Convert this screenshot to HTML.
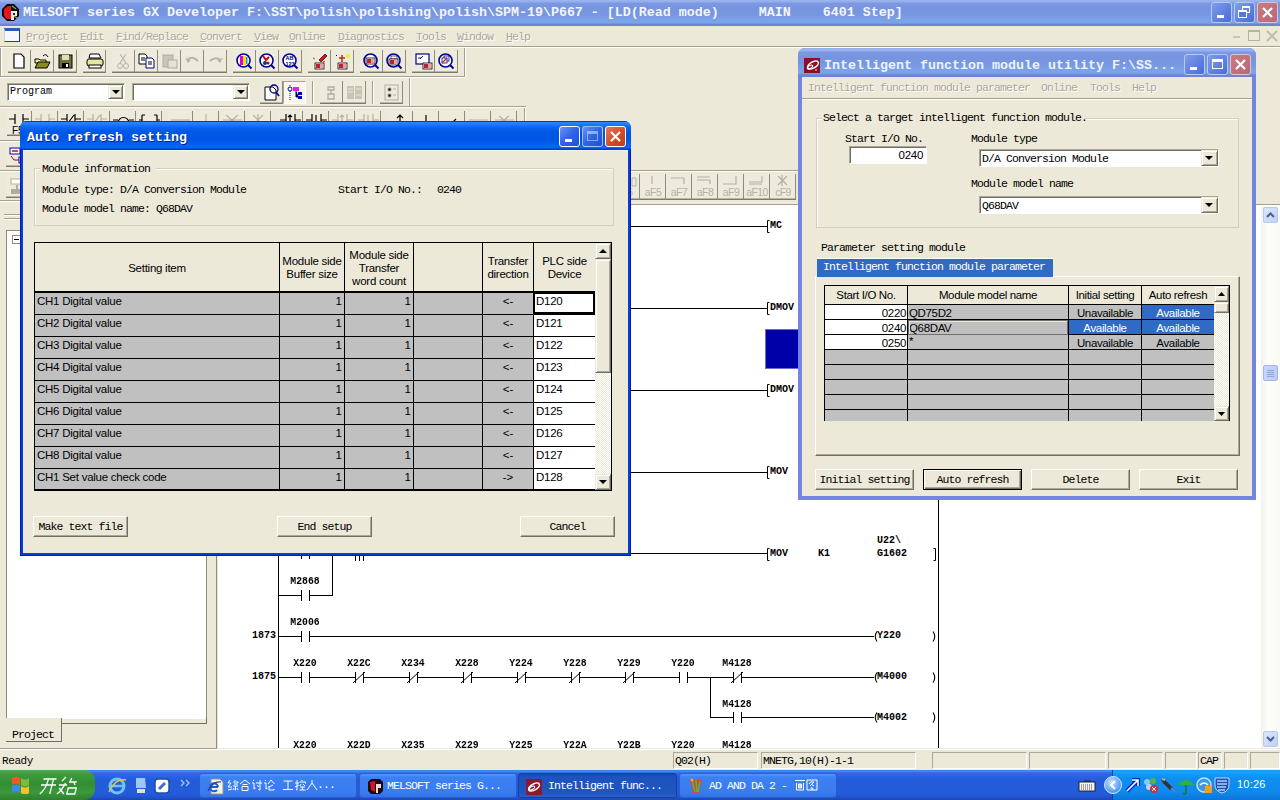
<!DOCTYPE html><html><head><meta charset="utf-8"><style>
*{box-sizing:border-box;margin:0;padding:0}
html,body{width:1280px;height:800px;overflow:hidden;background:#ECE9D8;font-family:"Liberation Mono",monospace;font-size:10px;color:#000;position:relative}
.a{position:absolute;white-space:pre}
.mono{font-family:"Liberation Mono",monospace}
.sans{font-family:"Liberation Sans",sans-serif}
.serif{font-family:"Liberation Serif",serif}
.tbtn{position:absolute;background:#EEEBDD;border-right:1px solid #8F8C7D;border-bottom:1px solid #7D7A6C;box-shadow:inset 0 -1px 0 #B9B6A6}
.xbtn{position:absolute;background:#ECE9D8;border:1px solid #FFF;border-right-color:#716F64;border-bottom-color:#716F64;box-shadow:inset -1px -1px 0 #ACA899}
.combo{position:absolute;background:#FFF;border:1px solid;border-color:#ACA899 #FFF #FFF #ACA899;box-shadow:inset 1px 1px 0 #716F64}
.cbb{position:absolute;background:#ECE9D8;border:1px solid;border-color:#ECE9D8 #716F64 #716F64 #ECE9D8;box-shadow:inset 1px 1px 0 #FFF,inset -1px -1px 0 #ACA899}
.tri{position:absolute;width:0;height:0;border-left:4px solid transparent;border-right:4px solid transparent;border-top:4px solid #000}
.menu{color:#ACA899;text-shadow:1px 1px 0 #FFF;font-size:10px}
.u{text-decoration:underline}
</style></head><body>
<div class="a" style="left:0px;top:0px;width:1280px;height:26px;background:linear-gradient(#9DB5EE 0,#93ADEC 2px,#7D99E3 3px,#7794E0 8px,#7895E0 14px,#7BA0E6 19px,#7BA5E9 23px,#6F86D8 24px,#6C80D4 26px)"></div>
<svg class="a" style="left:2px;top:4px" width="17" height="17" viewBox="0 0 17 17"><polygon points="5,0 12,0 17,5 17,12 12,17 5,17 0,12 0,5" fill="#120808"/><path d="M2 5 L6 2 L9 2 L9 15 L5 15 L2 12 Z" fill="#E01818"/><path d="M9 7 h6 v5 h-3 v4 h-3 z" fill="#F0ECEC"/><rect x="11" y="9" width="2" height="2" fill="#222"/><path d="M10 2 l4 3" stroke="#60B060" stroke-width="1.5"/><path d="M12 12 l3 2" stroke="#A0A060" stroke-width="1.2"/></svg>
<div class="a mono" style="left:23px;top:5px;color:#F2F5FD;font-size:13.33px;font-weight:bold;line-height:16px">MELSOFT series GX Developer F:\SST\polish\polishing\polish\SPM-19\P667 - [LD(Read mode)     MAIN    6401 Step]</div>
<div class="a" style="left:1211px;top:2px;width:21px;height:21px;border-radius:3px;border:1px solid #B8CAF4;background:linear-gradient(135deg,#7F9DEA,#5E7FE0 60%,#4B6BD8)"></div>
<div class="a" style="left:1217px;top:15px;width:7px;height:3px;background:#FFF"></div>
<div class="a" style="left:1234px;top:2px;width:21px;height:21px;border-radius:3px;border:1px solid #B8CAF4;background:linear-gradient(135deg,#7F9DEA,#5E7FE0 60%,#4B6BD8)"></div>
<div class="a" style="left:1242px;top:6px;width:8px;height:7px;border:1px solid #FFF;border-top:2px solid #FFF"></div>
<div class="a" style="left:1238px;top:10px;width:9px;height:8px;border:1px solid #FFF;border-top:2px solid #FFF;background:#5676DC"></div>
<div class="a" style="left:1257px;top:2px;width:21px;height:21px;border-radius:3px;border:1px solid #E2C2D0;background:linear-gradient(135deg,#C97B7B,#B66A7A)"></div>
<svg class="a" style="left:1257px;top:2px" width="21" height="21"><path d="M6 6 L15 15 M15 6 L6 15" stroke="#fff" stroke-width="2.2"/></svg>
<div class="a" style="left:0px;top:26px;width:1280px;height:20px;background:#ECE9D8"></div>
<div class="a" style="left:0px;top:46px;width:1280px;height:1px;background:#A3A08F"></div>
<div class="a" style="left:0px;top:47px;width:1280px;height:1px;background:#FFF"></div>
<div class="a" style="left:4px;top:28px;width:16px;height:14px;background:#F6F9FF;border:1px solid #20408a;border-top:3px solid #2C5CC5;border-left-color:#c8d4ee"></div>
<div class="a menu" style="left:26px;top:31px;line-height:12px;font-size:11.5px;letter-spacing:-0.9px"><span class="u">P</span>roject</div>
<div class="a menu" style="left:80px;top:31px;line-height:12px;font-size:11.5px;letter-spacing:-0.9px"><span class="u">E</span>dit</div>
<div class="a menu" style="left:116px;top:31px;line-height:12px;font-size:11.5px;letter-spacing:-0.9px"><span class="u">F</span>ind/Replace</div>
<div class="a menu" style="left:200px;top:31px;line-height:12px;font-size:11.5px;letter-spacing:-0.9px"><span class="u">C</span>onvert</div>
<div class="a menu" style="left:254px;top:31px;line-height:12px;font-size:11.5px;letter-spacing:-0.9px"><span class="u">V</span>iew</div>
<div class="a menu" style="left:289px;top:31px;line-height:12px;font-size:11.5px;letter-spacing:-0.9px"><span class="u">O</span>nline</div>
<div class="a menu" style="left:338px;top:31px;line-height:12px;font-size:11.5px;letter-spacing:-0.9px"><span class="u">D</span>iagnostics</div>
<div class="a menu" style="left:416px;top:31px;line-height:12px;font-size:11.5px;letter-spacing:-0.9px"><span class="u">T</span>ools</div>
<div class="a menu" style="left:457px;top:31px;line-height:12px;font-size:11.5px;letter-spacing:-0.9px"><span class="u">W</span>indow</div>
<div class="a menu" style="left:506px;top:31px;line-height:12px;font-size:11.5px;letter-spacing:-0.9px"><span class="u">H</span>elp</div>
<div class="a" style="left:1233px;top:36px;width:7px;height:2px;background:#C9C6B8"></div>
<div class="a" style="left:1248px;top:30px;width:12px;height:11px;border:1px solid #B5B2A2;border-top-width:2px"></div>
<svg class="a" style="left:1266px;top:30px" width="12" height="12"><path d="M1 1 L11 11 M11 1 L1 11" stroke="#BDBAAA" stroke-width="1.8"/></svg>
<div class="a" style="left:0px;top:76px;width:465px;height:1px;background:#A3A08F"></div>
<div class="a" style="left:0px;top:77px;width:465px;height:1px;background:#FFF"></div>
<div class="a" style="left:464px;top:48px;width:1px;height:29px;background:#A3A08F"></div>
<div class="a" style="left:465px;top:48px;width:1px;height:29px;background:#FFF"></div>
<div class="a" style="left:409px;top:78px;width:1px;height:28px;background:#A3A08F"></div>
<div class="a" style="left:410px;top:78px;width:1px;height:28px;background:#FFF"></div>
<div class="a" style="left:0px;top:106px;width:526px;height:1px;background:#A3A08F"></div>
<div class="a" style="left:0px;top:107px;width:526px;height:1px;background:#FFF"></div>
<div class="a" style="left:524px;top:108px;width:1px;height:30px;background:#A3A08F"></div>
<div class="a" style="left:525px;top:108px;width:1px;height:30px;background:#FFF"></div>
<div class="a" style="left:0px;top:140px;width:600px;height:1px;background:#A3A08F"></div>
<div class="a" style="left:0px;top:141px;width:600px;height:1px;background:#FFF"></div>
<div class="a" style="left:0px;top:170px;width:1000px;height:1px;background:#A3A08F"></div>
<div class="a" style="left:0px;top:171px;width:1000px;height:1px;background:#FFF"></div>
<div class="a" style="left:0px;top:200px;width:40px;height:1px;background:#A3A08F"></div>
<div class="a" style="left:0px;top:201px;width:40px;height:1px;background:#FFF"></div>
<div class="a" style="left:600px;top:204px;width:680px;height:1px;background:#A3A08F"></div>
<div class="a" style="left:600px;top:205px;width:680px;height:1px;background:#FFF"></div>
<div class="a" style="left:0px;top:48px;width:1px;height:28px;background:#A3A08F"></div>
<div class="a" style="left:1px;top:48px;width:1px;height:28px;background:#FFF"></div>
<div class="tbtn" style="left:8px;top:50px;width:23px;height:23px"></div>
<svg class="a" style="left:8px;top:50px" width="23" height="23" viewBox="0 0 23 23"><path d="M6 4h7l3 3v11H6z" fill="#fff" stroke="#000" stroke-width="1.2"/></svg>
<div class="tbtn" style="left:31px;top:50px;width:23px;height:23px"></div>
<svg class="a" style="left:31px;top:50px" width="23" height="23" viewBox="0 0 23 23"><path d="M4 9h4l1 1h6v3H4z" fill="#F2F088" stroke="#000"/><path d="M4 18l3-6h12l-3 6z" fill="#8A8A20" stroke="#000"/><path d="M12 6q3-3 5 1" stroke="#000" fill="none"/></svg>
<div class="tbtn" style="left:54px;top:50px;width:23px;height:23px"></div>
<svg class="a" style="left:54px;top:50px" width="23" height="23" viewBox="0 0 23 23"><rect x="5" y="5" width="13" height="13" fill="#70703A" stroke="#000"/><rect x="8" y="5" width="7" height="5" fill="#DDDDC0"/><rect x="8" y="13" width="7" height="5" fill="#000"/><rect x="12" y="14" width="2" height="3" fill="#fff"/></svg>
<div class="tbtn" style="left:83px;top:50px;width:23px;height:23px"></div>
<svg class="a" style="left:83px;top:50px" width="23" height="23" viewBox="0 0 23 23"><path d="M7 4h9l2 4H6z" fill="#fff" stroke="#000"/><rect x="4" y="9" width="16" height="7" rx="2" fill="#E6E6A0" stroke="#000"/><rect x="6" y="15" width="12" height="3" fill="#fff" stroke="#000"/></svg>
<div class="tbtn" style="left:112px;top:50px;width:23px;height:23px"></div>
<svg class="a" style="left:112px;top:50px" width="23" height="23" viewBox="0 0 23 23"><path d="M8 4l6 9M14 4l-6 9" stroke="#B8B5A5" stroke-width="1.2"/><circle cx="8" cy="16" r="2.5" fill="none" stroke="#B8B5A5"/><circle cx="14" cy="16" r="2.5" fill="none" stroke="#B8B5A5"/></svg>
<div class="tbtn" style="left:135px;top:50px;width:23px;height:23px"></div>
<svg class="a" style="left:135px;top:50px" width="23" height="23" viewBox="0 0 23 23"><path d="M4 4h6l2 2v8H4z" fill="#fff" stroke="#000"/><path d="M11 8h6l2 2v8h-8z" fill="#fff" stroke="#000080"/><path d="M13 12h4M13 14h4M6 8h4M6 10h4" stroke="#000"/></svg>
<div class="tbtn" style="left:158px;top:50px;width:23px;height:23px"></div>
<svg class="a" style="left:158px;top:50px" width="23" height="23" viewBox="0 0 23 23"><rect x="5" y="5" width="10" height="12" fill="#C9C6B6" stroke="#B0AD9C"/><rect x="10" y="10" width="9" height="8" fill="#E4E2D6" stroke="#B0AD9C"/></svg>
<div class="tbtn" style="left:181px;top:50px;width:23px;height:23px"></div>
<svg class="a" style="left:181px;top:50px" width="23" height="23" viewBox="0 0 23 23"><path d="M6 10q5-5 11 1" stroke="#B8B5A5" stroke-width="2" fill="none"/><path d="M4 8l3 5 3-3z" fill="#B8B5A5"/></svg>
<div class="tbtn" style="left:204px;top:50px;width:23px;height:23px"></div>
<svg class="a" style="left:204px;top:50px" width="23" height="23" viewBox="0 0 23 23"><path d="M6 11q5-5 11-1" stroke="#B8B5A5" stroke-width="2" fill="none"/><path d="M19 8l-3 5-3-3z" fill="#B8B5A5"/></svg>
<div class="tbtn" style="left:233px;top:50px;width:23px;height:23px"></div>
<svg class="a" style="left:233px;top:50px" width="23" height="23" viewBox="0 0 23 23"><circle cx="10.5" cy="10.5" r="6.5" fill="#fff" stroke="#0000A0" stroke-width="1.6"/><rect x="7" y="6" width="3" height="9" fill="#E000E0"/><rect x="10" y="6" width="3" height="9" fill="#E8E800"/><rect x="13" y="7" width="1.5" height="7" fill="#00A0E0"/><path d="M15 15l3.5 3.5" stroke="#0000A0" stroke-width="2"/></svg>
<div class="tbtn" style="left:256px;top:50px;width:23px;height:23px"></div>
<svg class="a" style="left:256px;top:50px" width="23" height="23" viewBox="0 0 23 23"><circle cx="10.5" cy="10.5" r="6.5" fill="#fff" stroke="#0000A0" stroke-width="1.6"/><path d="M7 6l3 4 3-3" stroke="#D00000" stroke-width="2" fill="none"/><circle cx="9" cy="13" r="2" fill="#004080"/><circle cx="12" cy="13" r="1.5" fill="#D00000"/><path d="M15 15l3.5 3.5" stroke="#0000A0" stroke-width="2"/></svg>
<div class="tbtn" style="left:279px;top:50px;width:23px;height:23px"></div>
<svg class="a" style="left:279px;top:50px" width="23" height="23" viewBox="0 0 23 23"><circle cx="10.5" cy="10.5" r="6.5" fill="#fff" stroke="#0000A0" stroke-width="1.6"/><text x="6.5" y="10" font-size="5.5" font-weight="bold" font-family="Liberation Sans" fill="#000080">AB</text><text x="6.5" y="15.5" font-size="5.5" font-weight="bold" font-family="Liberation Sans" fill="#000080">123</text><path d="M15 15l3.5 3.5" stroke="#0000A0" stroke-width="2"/></svg>
<div class="tbtn" style="left:308px;top:50px;width:23px;height:23px"></div>
<svg class="a" style="left:308px;top:50px" width="23" height="23" viewBox="0 0 23 23"><path d="M11 10l6-6 2 2-6 6z" fill="#E01010" stroke="#000" stroke-width=".6"/><path d="M5 8l2 1M17 11l-2 1" stroke="#C00000" stroke-width=".8"/><rect x="7" y="13" width="9" height="6" fill="#fff" stroke="#000" stroke-width=".8"/><rect x="8" y="14" width="4" height="4" fill="#C02030"/><rect x="12" y="14" width="3" height="4" fill="#E8A0A8"/></svg>
<div class="tbtn" style="left:331px;top:50px;width:23px;height:23px"></div>
<svg class="a" style="left:331px;top:50px" width="23" height="23" viewBox="0 0 23 23"><path d="M11 5v7M8 8h6" stroke="#D02020" stroke-width="1.5"/><path d="M5 5l1 1" stroke="#0000C0"/><circle cx="17" cy="6" r="2.2" fill="#F0F040"/><rect x="7" y="13" width="9" height="6" fill="#fff" stroke="#000" stroke-width=".8"/><rect x="8" y="14" width="4" height="4" fill="#C02030"/><rect x="12" y="14" width="3" height="4" fill="#E8A0A8"/></svg>
<div class="tbtn" style="left:360px;top:50px;width:23px;height:23px"></div>
<svg class="a" style="left:360px;top:50px" width="23" height="23" viewBox="0 0 23 23"><circle cx="10.5" cy="10.5" r="6.5" fill="#fff" stroke="#0000A0" stroke-width="1.6"/><rect x="6" y="8" width="9" height="6" fill="#fff" stroke="#000" stroke-width=".8"/><rect x="7" y="9" width="4" height="4" fill="#C02030"/><rect x="11" y="9" width="3" height="4" fill="#E8A0A8"/><path d="M15 15l3.5 3.5" stroke="#0000A0" stroke-width="2"/></svg>
<div class="tbtn" style="left:383px;top:50px;width:23px;height:23px"></div>
<svg class="a" style="left:383px;top:50px" width="23" height="23" viewBox="0 0 23 23"><circle cx="10.5" cy="10.5" r="6.5" fill="#fff" stroke="#0000A0" stroke-width="1.6"/><rect x="8" y="6" width="6" height="3" fill="#fff" stroke="#000" stroke-width=".6"/><rect x="6" y="9" width="9" height="6" fill="#fff" stroke="#000" stroke-width=".8"/><rect x="7" y="10" width="4" height="4" fill="#C02030"/><rect x="11" y="10" width="3" height="4" fill="#E8A0A8"/><path d="M15 15l3.5 3.5" stroke="#0000A0" stroke-width="2"/></svg>
<div class="tbtn" style="left:412px;top:50px;width:23px;height:23px"></div>
<svg class="a" style="left:412px;top:50px" width="23" height="23" viewBox="0 0 23 23"><rect x="4" y="4" width="13" height="10" fill="#fff" stroke="#000080" stroke-width="1.2"/><path d="M6 8h3l2-2M9 8l-1 1" stroke="#000080" stroke-width=".9" fill="none"/><rect x="11" y="13" width="9" height="6" fill="#fff" stroke="#000" stroke-width=".8"/><rect x="12" y="14" width="4" height="4" fill="#C02030"/><rect x="16" y="14" width="3" height="4" fill="#E8A0A8"/></svg>
<div class="tbtn" style="left:435px;top:50px;width:23px;height:23px"></div>
<svg class="a" style="left:435px;top:50px" width="23" height="23" viewBox="0 0 23 23"><circle cx="10.5" cy="10.5" r="6.5" fill="#fff" stroke="#0000A0" stroke-width="1.6"/><rect x="9" y="6" width="5" height="5" fill="#fff" stroke="#000080" stroke-width=".8"/><rect x="7" y="8" width="5" height="5" fill="#fff" stroke="#000080" stroke-width=".8"/><path d="M7 13l5-5" stroke="#C02030" stroke-width="1.2"/><path d="M15 15l3.5 3.5" stroke="#0000A0" stroke-width="2"/></svg>
<div class="combo" style="left:7px;top:83px;width:118px;height:18px"></div>
<div class="a mono" style="left:10px;top:86px;font-size:10px;line-height:12px">Program</div>
<div class="cbb" style="left:108px;top:85px;width:15px;height:14px"></div>
<div class="tri" style="left:112px;top:90px"></div>
<div class="combo" style="left:132px;top:83px;width:118px;height:18px"></div>
<div class="cbb" style="left:233px;top:85px;width:15px;height:14px"></div>
<div class="tri" style="left:237px;top:90px"></div>
<div class="tbtn" style="left:260px;top:81px;width:23px;height:23px"></div>
<svg class="a" style="left:260px;top:81px" width="23" height="23" viewBox="0 0 23 23"><path d="M5 6h8l3 3v10H5z" fill="#fff" stroke="#000"/><circle cx="14" cy="8" r="4" fill="none" stroke="#000080" stroke-width="1.3"/><path d="M16 11l3 4" stroke="#000080" stroke-width="1.5"/></svg>
<div class="a" style="left:283px;top:81px;width:23px;height:23px;background:#F7F6F1;border:1px solid;border-color:#A7A493 #FFF #FFF #A7A493"></div>
<svg class="a" style="left:283px;top:81px" width="23" height="23" viewBox="0 0 23 23"><path d="M7 4v16" stroke="#0000A0" stroke-dasharray="1 1"/><circle cx="7" cy="8" r="2" fill="#fff" stroke="#0000A0"/><rect x="10" y="6" width="6" height="4" fill="#E020E0"/><path d="M13 10v6h3" stroke="#0000A0"/><rect x="15" y="11" width="4" height="3" fill="#0000C0"/><rect x="15" y="15" width="4" height="3" fill="#0000C0"/></svg>
<div class="a" style="left:312px;top:81px;width:1px;height:23px;background:#A3A08F"></div>
<div class="a" style="left:313px;top:81px;width:1px;height:23px;background:#FFF"></div>
<div class="tbtn" style="left:320px;top:81px;width:23px;height:23px"></div>
<svg class="a" style="left:320px;top:81px" width="23" height="23" viewBox="0 0 23 23"><path d="M8 6h6v3h-6zM11 9v4M8 13h6v5h-6z" fill="none" stroke="#B0AD9C" stroke-width="1.3"/></svg>
<div class="tbtn" style="left:343px;top:81px;width:23px;height:23px"></div>
<svg class="a" style="left:343px;top:81px" width="23" height="23" viewBox="0 0 23 23"><rect x="4" y="5" width="7" height="13" fill="#C8C5B5"/><rect x="12" y="5" width="7" height="13" fill="#C8C5B5"/><path d="M5 8h5M5 11h5M13 8h5M13 14h5" stroke="#ECE9D8"/></svg>
<div class="a" style="left:372px;top:81px;width:1px;height:23px;background:#A3A08F"></div>
<div class="a" style="left:373px;top:81px;width:1px;height:23px;background:#FFF"></div>
<div class="tbtn" style="left:380px;top:81px;width:23px;height:23px"></div>
<svg class="a" style="left:380px;top:81px" width="23" height="23" viewBox="0 0 23 23"><rect x="5" y="4" width="13" height="15" fill="none" stroke="#B0AD9C"/><path d="M8 7h3v3H8zM8 13h3v3H8zM13 8h3M13 14h3" stroke="#B0AD9C"/></svg>
<div class="tbtn" style="left:7px;top:111px;width:25px;height:25px"></div>
<svg class="a" style="left:7px;top:111px" width="25" height="25" viewBox="0 0 25 25"><g stroke="#000" stroke-width="1.2" fill="none"><path d="M2 8h6M8 3v10M16 3v10M16 8h6"/></g><text x="5" y="23" font-size="10" font-family="Liberation Sans">F5</text></svg>
<div class="tbtn" style="left:33px;top:111px;width:25px;height:25px"></div>
<svg class="a" style="left:33px;top:111px" width="25" height="25" viewBox="0 0 25 25"><g stroke="#B5B2A2" stroke-width="1.2" fill="none"><path d="M2 8h6M8 3v10M16 3v10M16 8h6"/></g></svg>
<div class="tbtn" style="left:59px;top:111px;width:25px;height:25px"></div>
<svg class="a" style="left:59px;top:111px" width="25" height="25" viewBox="0 0 25 25"><g stroke="#000" stroke-width="1.2" fill="none"><path d="M2 8h6M8 3v10M16 3v10M16 8h6M9 12l6-8"/></g></svg>
<div class="tbtn" style="left:85px;top:111px;width:25px;height:25px"></div>
<svg class="a" style="left:85px;top:111px" width="25" height="25" viewBox="0 0 25 25"><g stroke="#B5B2A2" stroke-width="1.2" fill="none"><path d="M2 8h6M8 3v10M16 3v10M16 8h6M9 12l6-8"/></g></svg>
<div class="tbtn" style="left:111px;top:111px;width:25px;height:25px"></div>
<svg class="a" style="left:111px;top:111px" width="25" height="25" viewBox="0 0 25 25"><g stroke="#000" stroke-width="1.2" fill="none"><path d="M2 9h5M18 9h5"/><path d="M7 12a5.5 5.5 0 0 1 11 0"/></g></svg>
<div class="tbtn" style="left:137px;top:111px;width:25px;height:25px"></div>
<svg class="a" style="left:137px;top:111px" width="25" height="25" viewBox="0 0 25 25"><g stroke="#000" stroke-width="1.2" fill="none"><path d="M5 4h3M5 4v10h3M20 4h-3M20 4v10h-3M2 9h3M20 9h3"/></g></svg>
<div class="tbtn" style="left:168px;top:111px;width:25px;height:25px"></div>
<svg class="a" style="left:168px;top:111px" width="25" height="25" viewBox="0 0 25 25"><g stroke="#B5B2A2" stroke-width="1.2" fill="none"><path d="M3 9h19"/></g></svg>
<div class="tbtn" style="left:194px;top:111px;width:25px;height:25px"></div>
<svg class="a" style="left:194px;top:111px" width="25" height="25" viewBox="0 0 25 25"><g stroke="#B5B2A2" stroke-width="1.2" fill="none"><path d="M12 3v14"/></g></svg>
<div class="tbtn" style="left:220px;top:111px;width:25px;height:25px"></div>
<svg class="a" style="left:220px;top:111px" width="25" height="25" viewBox="0 0 25 25"><g stroke="#B5B2A2" stroke-width="1.2" fill="none"><path d="M3 9h19M6 4l12 10M18 4L6 14"/></g></svg>
<div class="tbtn" style="left:246px;top:111px;width:25px;height:25px"></div>
<svg class="a" style="left:246px;top:111px" width="25" height="25" viewBox="0 0 25 25"><g stroke="#B5B2A2" stroke-width="1.2" fill="none"><path d="M12 3v14M7 4l10 10M17 4L7 14"/></g></svg>
<div class="tbtn" style="left:278px;top:111px;width:25px;height:25px"></div>
<svg class="a" style="left:278px;top:111px" width="25" height="25" viewBox="0 0 25 25"><g stroke="#000" stroke-width="1.2" fill="none"><path d="M2 9h6M8 3v12M17 3v12M17 9h6M12 14V4M10 6l2-2 2 2"/></g></svg>
<div class="tbtn" style="left:304px;top:111px;width:25px;height:25px"></div>
<svg class="a" style="left:304px;top:111px" width="25" height="25" viewBox="0 0 25 25"><g stroke="#000" stroke-width="1.2" fill="none"><path d="M2 9h6M8 3v12M17 3v12M17 9h6M12 4v10M10 12l2 2 2-2"/></g></svg>
<div class="tbtn" style="left:330px;top:111px;width:25px;height:25px"></div>
<svg class="a" style="left:330px;top:111px" width="25" height="25" viewBox="0 0 25 25"><g stroke="#B5B2A2" stroke-width="1.2" fill="none"><path d="M2 9h6M8 3v12M17 3v12M17 9h6M12 14V4M10 6l2-2 2 2"/></g></svg>
<div class="tbtn" style="left:356px;top:111px;width:25px;height:25px"></div>
<svg class="a" style="left:356px;top:111px" width="25" height="25" viewBox="0 0 25 25"><g stroke="#B5B2A2" stroke-width="1.2" fill="none"><path d="M2 9h6M8 3v12M17 3v12M17 9h6M12 4v10M10 12l2 2 2-2"/></g></svg>
<div class="tbtn" style="left:388px;top:111px;width:25px;height:25px"></div>
<svg class="a" style="left:388px;top:111px" width="25" height="25" viewBox="0 0 25 25"><g stroke="#000" stroke-width="1.2" fill="none"><path d="M12 16V4M9 7l3-3 3 3"/></g></svg>
<div class="tbtn" style="left:414px;top:111px;width:25px;height:25px"></div>
<svg class="a" style="left:414px;top:111px" width="25" height="25" viewBox="0 0 25 25"><g stroke="#000" stroke-width="1.2" fill="none"><path d="M12 4v12"/></g></svg>
<div class="tbtn" style="left:440px;top:111px;width:25px;height:25px"></div>
<svg class="a" style="left:440px;top:111px" width="25" height="25" viewBox="0 0 25 25"><g stroke="#000" stroke-width="1.2" fill="none"><path d="M3 12h19M9 15l7-7"/></g></svg>
<div class="tbtn" style="left:466px;top:111px;width:25px;height:25px"></div>
<svg class="a" style="left:466px;top:111px" width="25" height="25" viewBox="0 0 25 25"><g stroke="#B5B2A2" stroke-width="1.2" fill="none"><path d="M3 9h19M3 14h19"/></g></svg>
<div class="tbtn" style="left:492px;top:111px;width:25px;height:25px"></div>
<svg class="a" style="left:492px;top:111px" width="25" height="25" viewBox="0 0 25 25"><g stroke="#B5B2A2" stroke-width="1.2" fill="none"><path d="M3 9h19M7 5l10 8M17 5L7 13"/></g></svg>
<div class="tbtn" style="left:6px;top:144px;width:25px;height:23px"></div>
<svg class="a" style="left:6px;top:144px" width="25" height="23" viewBox="0 0 25 23"><rect x="4" y="4" width="10" height="6" fill="#fff" stroke="#0000C0"/><path d="M6 7h6" stroke="#E00000" stroke-width="1.5"/><path d="M5 12l3 4h5" stroke="#C00000" fill="none"/><rect x="13" y="13" width="7" height="6" fill="#fff" stroke="#0000C0"/></svg>
<div class="tbtn" style="left:6px;top:175px;width:25px;height:23px"></div>
<svg class="a" style="left:6px;top:175px" width="25" height="23" viewBox="0 0 25 23"><rect x="5" y="4" width="13" height="5" fill="#fff" stroke="#B0AD9C"/><path d="M11 10v4" stroke="#B0AD9C" stroke-width="2"/><rect x="5" y="14" width="13" height="5" fill="#B0AD9C"/></svg>
<div class="tbtn" style="left:614px;top:174px;width:26px;height:26px"></div>
<svg class="a" style="left:614px;top:174px" width="26" height="26" viewBox="0 0 26 26"><path d="M3 4h4v8H3zM18 4h4v8h-4z" stroke="#B5B2A2" fill="none"/></svg>
<div class="a sans" style="left:614px;top:186px;width:26px;text-align:center;font-size:10.5px;line-height:12px;color:#B5B2A2;letter-spacing:-0.6px">F5</div>
<div class="tbtn" style="left:640px;top:174px;width:26px;height:26px"></div>
<svg class="a" style="left:640px;top:174px" width="26" height="26" viewBox="0 0 26 26"><path d="M12 2v8" stroke="#B5B2A2" stroke-width="1.2"/></svg>
<div class="a sans" style="left:640px;top:186px;width:26px;text-align:center;font-size:10.5px;line-height:12px;color:#B5B2A2;letter-spacing:-0.6px">aF5</div>
<div class="tbtn" style="left:666px;top:174px;width:26px;height:26px"></div>
<svg class="a" style="left:666px;top:174px" width="26" height="26" viewBox="0 0 26 26"><path d="M5 4h13v6" stroke="#B5B2A2" stroke-width="1.2" fill="none"/></svg>
<div class="a sans" style="left:666px;top:186px;width:26px;text-align:center;font-size:10.5px;line-height:12px;color:#B5B2A2;letter-spacing:-0.6px">aF7</div>
<div class="tbtn" style="left:692px;top:174px;width:26px;height:26px"></div>
<svg class="a" style="left:692px;top:174px" width="26" height="26" viewBox="0 0 26 26"><path d="M5 3h13M5 6h13v4" stroke="#B5B2A2" stroke-width="1.2" fill="none"/></svg>
<div class="a sans" style="left:692px;top:186px;width:26px;text-align:center;font-size:10.5px;line-height:12px;color:#B5B2A2;letter-spacing:-0.6px">aF8</div>
<div class="tbtn" style="left:718px;top:174px;width:26px;height:26px"></div>
<svg class="a" style="left:718px;top:174px" width="26" height="26" viewBox="0 0 26 26"><path d="M18 2v8H5" stroke="#B5B2A2" stroke-width="1.2" fill="none"/></svg>
<div class="a sans" style="left:718px;top:186px;width:26px;text-align:center;font-size:10.5px;line-height:12px;color:#B5B2A2;letter-spacing:-0.6px">aF9</div>
<div class="tbtn" style="left:744px;top:174px;width:26px;height:26px"></div>
<svg class="a" style="left:744px;top:174px" width="26" height="26" viewBox="0 0 26 26"><path d="M18 2v6H5M5 10h13" stroke="#B5B2A2" stroke-width="1.2" fill="none"/></svg>
<div class="a sans" style="left:744px;top:186px;width:26px;text-align:center;font-size:10.5px;line-height:12px;color:#B5B2A2;letter-spacing:-0.6px">aF10</div>
<div class="tbtn" style="left:770px;top:174px;width:26px;height:26px"></div>
<svg class="a" style="left:770px;top:174px" width="26" height="26" viewBox="0 0 26 26"><path d="M8 2l9 9M17 2l-9 9M12 1v11" stroke="#B5B2A2" stroke-width="1.2" fill="none"/></svg>
<div class="a sans" style="left:770px;top:186px;width:26px;text-align:center;font-size:10.5px;line-height:12px;color:#B5B2A2;letter-spacing:-0.6px">cF9</div>
<div class="a" style="left:0px;top:202px;width:218px;height:547px;background:#ECE9D8"></div>
<div class="a" style="left:4px;top:214px;width:210px;height:1px;background:#A3A08F"></div>
<div class="a" style="left:4px;top:215px;width:210px;height:1px;background:#FFF"></div>
<div class="a" style="left:4px;top:218px;width:210px;height:1px;background:#A3A08F"></div>
<div class="a" style="left:4px;top:219px;width:210px;height:1px;background:#FFF"></div>
<div class="a" style="left:6px;top:230px;width:201px;height:489px;background:#FFF;border-top:1px solid #8F8C7D;border-left:1px solid #8F8C7D;border-right:1px solid #8F8C7D"></div>
<div class="a" style="left:12px;top:235px;width:9px;height:9px;border:1px solid #8F8C7D;background:#fff"></div>
<div class="a" style="left:14px;top:239px;width:5px;height:1px;background:#000"></div>
<div class="a" style="left:6px;top:718px;width:56px;height:24px;background:#ECE9D8;border-right:1px solid #716F64;border-bottom:1px solid #716F64"></div>
<div class="a" style="left:61px;top:723px;width:146px;height:1px;background:#716F64"></div>
<div class="a" style="left:206px;top:718px;width:1px;height:6px;background:#716F64"></div>
<div class="a mono" style="left:12px;top:729px;font-size:11.5px;line-height:12px;letter-spacing:-0.9px">Project</div>
<div class="a" style="left:216px;top:202px;width:1px;height:547px;background:#8F8C7D"></div>
<div class="a" style="left:0px;top:748px;width:217px;height:1px;background:#A3A08F"></div>
<div class="a" style="left:218px;top:206px;width:1043px;height:542px;background:#FFF"></div>
<div class="a" style="left:1261px;top:206px;width:19px;height:542px;background:linear-gradient(90deg,#F3F1EC,#FEFEFB 40%,#FAF9F5)"></div>
<div class="a" style="left:1263px;top:207px;width:15px;height:16px;border-radius:2px;background:linear-gradient(135deg,#DCE6FD,#C0D1F8);border:1px solid #B5C8F2"></div>
<svg class="a" style="left:1263px;top:207px" width="15" height="16" viewBox="0 0 15 16"><path d="M4 10l3.5-3.5 3.5 3.5" stroke="#4D6185" stroke-width="2" fill="none"/></svg>
<div class="a" style="left:1263px;top:731px;width:15px;height:16px;border-radius:2px;background:linear-gradient(135deg,#DCE6FD,#C0D1F8);border:1px solid #B5C8F2"></div>
<svg class="a" style="left:1263px;top:731px" width="15" height="16" viewBox="0 0 15 16"><path d="M4 6l3.5 3.5 3.5-3.5" stroke="#4D6185" stroke-width="2" fill="none"/></svg>
<div class="a" style="left:1263px;top:365px;width:15px;height:16px;border-radius:2px;background:linear-gradient(90deg,#C8D6FB,#BCCDF8);border:1px solid #9FB6EE"></div>
<div class="a" style="left:1267px;top:370px;width:7px;height:1px;background:#8EA5DC"></div>
<div class="a" style="left:1267px;top:372px;width:7px;height:1px;background:#8EA5DC"></div>
<div class="a" style="left:1267px;top:374px;width:7px;height:1px;background:#8EA5DC"></div>
<div class="a" style="left:1267px;top:376px;width:7px;height:1px;background:#8EA5DC"></div>
<div class="a" style="left:278px;top:206px;width:1px;height:542px;background:#000"></div>
<div class="a" style="left:938px;top:500px;width:1px;height:248px;background:#000"></div>
<div class="a" style="left:279px;top:226px;width:488px;height:1px;background:#000"></div>
<svg class="a" style="left:766px;top:220px" width="4" height="13" viewBox="0 0 4 13"><path d="M3.5 0.5H1.5V12.5H3.5" stroke="#000" fill="none"/></svg>
<div class="a mono" style="left:770px;top:221px;font-size:10px;line-height:10px;font-weight:bold">MC</div>
<div class="a" style="left:279px;top:308px;width:488px;height:1px;background:#000"></div>
<svg class="a" style="left:766px;top:302px" width="4" height="13" viewBox="0 0 4 13"><path d="M3.5 0.5H1.5V12.5H3.5" stroke="#000" fill="none"/></svg>
<div class="a mono" style="left:770px;top:303px;font-size:10px;line-height:10px;font-weight:bold">DMOV</div>
<div class="a" style="left:279px;top:390px;width:488px;height:1px;background:#000"></div>
<svg class="a" style="left:766px;top:384px" width="4" height="13" viewBox="0 0 4 13"><path d="M3.5 0.5H1.5V12.5H3.5" stroke="#000" fill="none"/></svg>
<div class="a mono" style="left:770px;top:385px;font-size:10px;line-height:10px;font-weight:bold">DMOV</div>
<div class="a" style="left:279px;top:472px;width:488px;height:1px;background:#000"></div>
<svg class="a" style="left:766px;top:466px" width="4" height="13" viewBox="0 0 4 13"><path d="M3.5 0.5H1.5V12.5H3.5" stroke="#000" fill="none"/></svg>
<div class="a mono" style="left:770px;top:467px;font-size:10px;line-height:10px;font-weight:bold">MOV</div>
<div class="a" style="left:765px;top:329px;width:35px;height:40px;background:#0000A8;border:1px solid #6A6AD0"></div>
<div class="a" style="left:279px;top:553px;width:488px;height:1px;background:#000"></div>
<svg class="a" style="left:766px;top:548px" width="4" height="13" viewBox="0 0 4 13"><path d="M3.5 0.5H1.5V12.5H3.5" stroke="#000" fill="none"/></svg>
<div class="a mono" style="left:770px;top:549px;font-size:10px;line-height:10px;font-weight:bold">MOV</div>
<div class="a mono" style="left:818px;top:549px;font-size:10px;line-height:10px;font-weight:bold">K1</div>
<div class="a mono" style="left:877px;top:536px;font-size:10px;line-height:10px;font-weight:bold">U22\</div>
<div class="a mono" style="left:877px;top:549px;font-size:10px;line-height:10px;font-weight:bold">G1602</div>
<svg class="a" style="left:933px;top:548px" width="4" height="13" viewBox="0 0 4 13"><path d="M0.5 0.5H2.5V12.5H0.5" stroke="#000" fill="none"/></svg>
<div class="a" style="left:301px;top:548px;width:1px;height:11px;background:#000"></div>
<div class="a" style="left:309px;top:548px;width:1px;height:11px;background:#000"></div>
<div class="a" style="left:279px;top:553px;width:22px;height:1px;background:#000"></div>
<div class="a" style="left:309px;top:553px;width:23px;height:1px;background:#000"></div>
<div class="a" style="left:355px;top:555px;width:1px;height:6px;background:#000"></div>
<div class="a" style="left:359px;top:555px;width:1px;height:6px;background:#000"></div>
<div class="a" style="left:363px;top:555px;width:1px;height:6px;background:#000"></div>
<div class="a mono" style="left:289px;top:577px;width:32px;text-align:center;font-size:10px;line-height:10px;font-weight:bold;transform:scaleX(0.98)">M2868</div>
<div class="a" style="left:301px;top:590px;width:1px;height:11px;background:#000"></div>
<div class="a" style="left:309px;top:590px;width:1px;height:11px;background:#000"></div>
<div class="a" style="left:279px;top:595px;width:22px;height:1px;background:#000"></div>
<div class="a" style="left:310px;top:595px;width:23px;height:1px;background:#000"></div>
<div class="a" style="left:332px;top:553px;width:1px;height:43px;background:#000"></div>
<div class="a mono" style="left:289px;top:618px;width:32px;text-align:center;font-size:10px;line-height:10px;font-weight:bold;transform:scaleX(0.98)">M2006</div>
<div class="a" style="left:301px;top:631px;width:1px;height:11px;background:#000"></div>
<div class="a" style="left:309px;top:631px;width:1px;height:11px;background:#000"></div>
<div class="a" style="left:279px;top:636px;width:22px;height:1px;background:#000"></div>
<div class="a" style="left:310px;top:636px;width:564px;height:1px;background:#000"></div>
<div class="a mono" style="left:252px;top:631px;font-size:10px;line-height:10px;font-weight:bold">1873</div>
<svg class="a" style="left:873px;top:631px" width="5" height="11" viewBox="0 0 5 11"><path d="M4 0.5Q0.5 5.5 4 10.5" stroke="#000" fill="none" stroke-width="1.1"/></svg>
<div class="a mono" style="left:877px;top:631px;font-size:10px;line-height:10px;font-weight:bold">Y220</div>
<svg class="a" style="left:932px;top:631px" width="5" height="11" viewBox="0 0 5 11"><path d="M1 0.5Q4.5 5.5 1 10.5" stroke="#000" fill="none" stroke-width="1.1"/></svg>
<div class="a mono" style="left:252px;top:672px;font-size:10px;line-height:10px;font-weight:bold">1875</div>
<div class="a mono" style="left:292px;top:659px;width:26px;text-align:center;font-size:10px;line-height:10px;font-weight:bold;transform:scaleX(0.98)">X220</div>
<div class="a" style="left:279px;top:677px;width:22px;height:1px;background:#000"></div>
<div class="a" style="left:301px;top:672px;width:1px;height:11px;background:#000"></div>
<div class="a" style="left:309px;top:672px;width:1px;height:11px;background:#000"></div>
<div class="a mono" style="left:346px;top:659px;width:26px;text-align:center;font-size:10px;line-height:10px;font-weight:bold;transform:scaleX(0.98)">X22C</div>
<div class="a" style="left:310px;top:677px;width:45px;height:1px;background:#000"></div>
<div class="a" style="left:355px;top:672px;width:1px;height:11px;background:#000"></div>
<div class="a" style="left:363px;top:672px;width:1px;height:11px;background:#000"></div>
<svg class="a" style="left:351px;top:671px" width="16" height="13" viewBox="0 0 16 13"><path d="M2 12 L14 1" stroke="#000" stroke-width="1"/></svg>
<div class="a mono" style="left:400px;top:659px;width:26px;text-align:center;font-size:10px;line-height:10px;font-weight:bold;transform:scaleX(0.98)">X234</div>
<div class="a" style="left:364px;top:677px;width:45px;height:1px;background:#000"></div>
<div class="a" style="left:409px;top:672px;width:1px;height:11px;background:#000"></div>
<div class="a" style="left:417px;top:672px;width:1px;height:11px;background:#000"></div>
<svg class="a" style="left:405px;top:671px" width="16" height="13" viewBox="0 0 16 13"><path d="M2 12 L14 1" stroke="#000" stroke-width="1"/></svg>
<div class="a mono" style="left:454px;top:659px;width:26px;text-align:center;font-size:10px;line-height:10px;font-weight:bold;transform:scaleX(0.98)">X228</div>
<div class="a" style="left:418px;top:677px;width:45px;height:1px;background:#000"></div>
<div class="a" style="left:463px;top:672px;width:1px;height:11px;background:#000"></div>
<div class="a" style="left:471px;top:672px;width:1px;height:11px;background:#000"></div>
<svg class="a" style="left:459px;top:671px" width="16" height="13" viewBox="0 0 16 13"><path d="M2 12 L14 1" stroke="#000" stroke-width="1"/></svg>
<div class="a mono" style="left:508px;top:659px;width:26px;text-align:center;font-size:10px;line-height:10px;font-weight:bold;transform:scaleX(0.98)">Y224</div>
<div class="a" style="left:472px;top:677px;width:45px;height:1px;background:#000"></div>
<div class="a" style="left:517px;top:672px;width:1px;height:11px;background:#000"></div>
<div class="a" style="left:525px;top:672px;width:1px;height:11px;background:#000"></div>
<svg class="a" style="left:513px;top:671px" width="16" height="13" viewBox="0 0 16 13"><path d="M2 12 L14 1" stroke="#000" stroke-width="1"/></svg>
<div class="a mono" style="left:562px;top:659px;width:26px;text-align:center;font-size:10px;line-height:10px;font-weight:bold;transform:scaleX(0.98)">Y228</div>
<div class="a" style="left:526px;top:677px;width:45px;height:1px;background:#000"></div>
<div class="a" style="left:571px;top:672px;width:1px;height:11px;background:#000"></div>
<div class="a" style="left:579px;top:672px;width:1px;height:11px;background:#000"></div>
<svg class="a" style="left:567px;top:671px" width="16" height="13" viewBox="0 0 16 13"><path d="M2 12 L14 1" stroke="#000" stroke-width="1"/></svg>
<div class="a mono" style="left:616px;top:659px;width:26px;text-align:center;font-size:10px;line-height:10px;font-weight:bold;transform:scaleX(0.98)">Y229</div>
<div class="a" style="left:580px;top:677px;width:45px;height:1px;background:#000"></div>
<div class="a" style="left:625px;top:672px;width:1px;height:11px;background:#000"></div>
<div class="a" style="left:633px;top:672px;width:1px;height:11px;background:#000"></div>
<svg class="a" style="left:621px;top:671px" width="16" height="13" viewBox="0 0 16 13"><path d="M2 12 L14 1" stroke="#000" stroke-width="1"/></svg>
<div class="a mono" style="left:670px;top:659px;width:26px;text-align:center;font-size:10px;line-height:10px;font-weight:bold;transform:scaleX(0.98)">Y220</div>
<div class="a" style="left:634px;top:677px;width:45px;height:1px;background:#000"></div>
<div class="a" style="left:679px;top:672px;width:1px;height:11px;background:#000"></div>
<div class="a" style="left:687px;top:672px;width:1px;height:11px;background:#000"></div>
<div class="a mono" style="left:721px;top:659px;width:32px;text-align:center;font-size:10px;line-height:10px;font-weight:bold;transform:scaleX(0.98)">M4128</div>
<div class="a" style="left:688px;top:677px;width:45px;height:1px;background:#000"></div>
<div class="a" style="left:733px;top:672px;width:1px;height:11px;background:#000"></div>
<div class="a" style="left:741px;top:672px;width:1px;height:11px;background:#000"></div>
<svg class="a" style="left:729px;top:671px" width="16" height="13" viewBox="0 0 16 13"><path d="M2 12 L14 1" stroke="#000" stroke-width="1"/></svg>
<div class="a" style="left:742px;top:677px;width:132px;height:1px;background:#000"></div>
<svg class="a" style="left:873px;top:672px" width="5" height="11" viewBox="0 0 5 11"><path d="M4 0.5Q0.5 5.5 4 10.5" stroke="#000" fill="none" stroke-width="1.1"/></svg>
<div class="a mono" style="left:877px;top:672px;font-size:10px;line-height:10px;font-weight:bold">M4000</div>
<svg class="a" style="left:932px;top:672px" width="5" height="11" viewBox="0 0 5 11"><path d="M1 0.5Q4.5 5.5 1 10.5" stroke="#000" fill="none" stroke-width="1.1"/></svg>
<div class="a" style="left:710px;top:677px;width:1px;height:41px;background:#000"></div>
<div class="a mono" style="left:721px;top:700px;width:32px;text-align:center;font-size:10px;line-height:10px;font-weight:bold;transform:scaleX(0.98)">M4128</div>
<div class="a" style="left:733px;top:712px;width:1px;height:11px;background:#000"></div>
<div class="a" style="left:741px;top:712px;width:1px;height:11px;background:#000"></div>
<div class="a" style="left:710px;top:717px;width:23px;height:1px;background:#000"></div>
<div class="a" style="left:742px;top:717px;width:132px;height:1px;background:#000"></div>
<svg class="a" style="left:873px;top:712px" width="5" height="11" viewBox="0 0 5 11"><path d="M4 0.5Q0.5 5.5 4 10.5" stroke="#000" fill="none" stroke-width="1.1"/></svg>
<div class="a mono" style="left:877px;top:713px;font-size:10px;line-height:10px;font-weight:bold">M4002</div>
<svg class="a" style="left:932px;top:712px" width="5" height="11" viewBox="0 0 5 11"><path d="M1 0.5Q4.5 5.5 1 10.5" stroke="#000" fill="none" stroke-width="1.1"/></svg>
<div class="a mono" style="left:292px;top:741px;width:26px;text-align:center;font-size:10px;line-height:10px;font-weight:bold;transform:scaleX(0.98)">X220</div>
<div class="a mono" style="left:346px;top:741px;width:26px;text-align:center;font-size:10px;line-height:10px;font-weight:bold;transform:scaleX(0.98)">X22D</div>
<div class="a mono" style="left:400px;top:741px;width:26px;text-align:center;font-size:10px;line-height:10px;font-weight:bold;transform:scaleX(0.98)">X235</div>
<div class="a mono" style="left:454px;top:741px;width:26px;text-align:center;font-size:10px;line-height:10px;font-weight:bold;transform:scaleX(0.98)">X229</div>
<div class="a mono" style="left:508px;top:741px;width:26px;text-align:center;font-size:10px;line-height:10px;font-weight:bold;transform:scaleX(0.98)">Y225</div>
<div class="a mono" style="left:562px;top:741px;width:26px;text-align:center;font-size:10px;line-height:10px;font-weight:bold;transform:scaleX(0.98)">Y22A</div>
<div class="a mono" style="left:616px;top:741px;width:26px;text-align:center;font-size:10px;line-height:10px;font-weight:bold;transform:scaleX(0.98)">Y22B</div>
<div class="a mono" style="left:670px;top:741px;width:26px;text-align:center;font-size:10px;line-height:10px;font-weight:bold;transform:scaleX(0.98)">Y220</div>
<div class="a mono" style="left:721px;top:741px;width:32px;text-align:center;font-size:10px;line-height:10px;font-weight:bold;transform:scaleX(0.98)">M4128</div>
<div class="a" style="left:218px;top:748px;width:1062px;height:2px;background:#ECE9D8"></div>
<div class="a" style="left:0px;top:749px;width:1280px;height:21px;background:#ECE9D8"></div>
<div class="a" style="left:0px;top:749px;width:1280px;height:1px;background:#FFF"></div>
<div class="a mono" style="left:2px;top:755px;font-size:11px;line-height:12px;letter-spacing:-0.4px">Ready</div>
<div class="a" style="left:673px;top:752px;width:85px;height:17px;border:1px solid;border-color:#ACA899 #FFF #FFF #ACA899"></div>
<div class="a mono" style="left:675px;top:755px;font-size:11.5px;line-height:12px;letter-spacing:-0.9px">Q02(H)</div>
<div class="a" style="left:761px;top:752px;width:155px;height:17px;border:1px solid;border-color:#ACA899 #FFF #FFF #ACA899"></div>
<div class="a mono" style="left:763px;top:755px;font-size:11.5px;line-height:12px;letter-spacing:-0.9px">MNETG,10(H)-1-1</div>
<div class="a" style="left:932px;top:752px;width:95px;height:17px;border:1px solid;border-color:#ACA899 #FFF #FFF #ACA899"></div>
<div class="a" style="left:1029px;top:752px;width:77px;height:17px;border:1px solid;border-color:#ACA899 #FFF #FFF #ACA899"></div>
<div class="a" style="left:1108px;top:752px;width:55px;height:17px;border:1px solid;border-color:#ACA899 #FFF #FFF #ACA899"></div>
<div class="a" style="left:1165px;top:752px;width:32px;height:17px;border:1px solid;border-color:#ACA899 #FFF #FFF #ACA899"></div>
<div class="a" style="left:1198px;top:752px;width:24px;height:17px;border:1px solid;border-color:#ACA899 #FFF #FFF #ACA899"></div>
<div class="a mono" style="left:1200px;top:755px;font-size:11.5px;line-height:12px;letter-spacing:-0.9px">CAP</div>
<div class="a" style="left:1224px;top:752px;width:24px;height:17px;border:1px solid;border-color:#ACA899 #FFF #FFF #ACA899"></div>
<div class="a" style="left:1250px;top:752px;width:30px;height:17px;border:1px solid;border-color:#ACA899 #FFF #FFF #ACA899"></div>
<div class="a" style="left:0px;top:770px;width:1280px;height:30px;background:linear-gradient(#3A74E6 0,#4A8CF0 1px,#2F6AE5 3px,#245BDB 10px,#245BDB 24px,#2050C8 28px,#1A45B5 30px)"></div>
<div class="a" style="left:0;top:770px;width:95px;height:30px;border-radius:0 11px 11px 0;background:linear-gradient(#4FAE4F 0,#3C9B3C 4px,#338E33 14px,#3A9A3A 22px,#2F7E2F 30px)"></div>
<svg class="a" style="left:10px;top:774px" width="22" height="20" viewBox="0 0 22 20"><path d="M2 4q4-3 8 0v7q-4-3-8 0z" fill="#F05A22"/><path d="M11 4q4 3 8 0v7q-4 3-8 0z" fill="#7CBB3C"/><path d="M2 12q4-3 8 0v7q-4-3-8 0z" fill="#3A8CE8"/><path d="M11 12q4 3 8 0v7q-4 3-8 0z" fill="#F6C12A"/></svg>
<svg class="a" style="left:37px;top:773px" width="40" height="24" viewBox="0 0 40 24"><g stroke="#fff" stroke-width="1.3" fill="none" transform="skewX(-14) translate(5 0)"><path d="M3 6h13M2 12h15M8 6q0 10-5 15M13 6v15"/><path d="M22 8l3-4M20 12h8M26 10q-2 8-6 11M21 15l6 6"/><path d="M31 5l-1 4h7M34 9l2 3M30 15h8v6h-8z"/></g></svg>
<svg class="a" style="left:107px;top:776px" width="20" height="20" viewBox="0 0 20 20"><circle cx="10" cy="10" r="7" fill="none" stroke="#6CC4FF" stroke-width="3"/><path d="M4 10h12" stroke="#6CC4FF" stroke-width="2.5"/><path d="M2 16q6-14 17-12" stroke="#E8C040" stroke-width="1.5" fill="none"/></svg>
<svg class="a" style="left:133px;top:776px" width="16" height="20" viewBox="0 0 16 20"><path d="M3 2h9l1 10H3z" fill="#9CC8F8"/><path d="M4 13h8v4H4z" fill="#E0E0E0"/></svg>
<svg class="a" style="left:152px;top:776px" width="20" height="20" viewBox="0 0 20 20"><rect x="3" y="3" width="14" height="14" rx="3" fill="#fff" stroke="#1E4EA8" stroke-width="1.5"/><path d="M6 12l6-6 2 2-6 6z" fill="#3A6AD8"/></svg>
<svg class="a" style="left:180px;top:778px" width="12" height="10" viewBox="0 0 12 10"><path d="M1 2l3 3-3 3M6 2l3 3-3 3" stroke="#A8C8F8" stroke-width="1.3" fill="none"/></svg>
<div class="a" style="left:199px;top:773px;width:158px;height:25px;border-radius:3px;background:linear-gradient(#5A98F8 0,#3C80F2 3px,#3A7CF0 18px,#3170E6 24px);border:1px solid #2A5DC8"></div>
<div class="a" style="left:359px;top:773px;width:158px;height:25px;border-radius:3px;background:linear-gradient(#5A98F8 0,#3C80F2 3px,#3A7CF0 18px,#3170E6 24px);border:1px solid #2A5DC8"></div>
<div class="a" style="left:518px;top:773px;width:159px;height:25px;border-radius:3px;background:linear-gradient(#1A48B0,#1E52BE 3px,#1F56C2 20px,#2A62CE);border:1px solid #17409A"></div>
<div class="a" style="left:679px;top:773px;width:158px;height:25px;border-radius:3px;background:linear-gradient(#5A98F8 0,#3C80F2 3px,#3A7CF0 18px,#3170E6 24px);border:1px solid #2A5DC8"></div>
<svg class="a" style="left:207px;top:778px" width="17" height="17" viewBox="0 0 17 17"><path d="M4 1h9l3 3v12H4z" fill="#F6F2E4" stroke="#9A9480"/><path d="M3 9h8M11 9a4 4 0 1 0-1 3" stroke="#1E5CC8" stroke-width="2" fill="none"/><path d="M1 13q5-10 13-9" stroke="#2A40A0" stroke-width="1.2" fill="none"/></svg>
<svg class="a" style="left:227px;top:779px" width="48" height="13" viewBox="0 0 48 13"><g stroke="#fff" stroke-width="1" fill="none"><path transform="translate(0,0)" d="M3 1L1 4h3L1 8h4M1 11l4-1M8 1v1M6 3h5v1M7 5h4M6 7h5M8.5 7v4l-1-.5M7 9l-1 2M10 9l1 2"/><path transform="translate(12,0)" d="M6 1L1 5M6 1l5 4M3.5 5.5h5M3 7.5h6v4H3z"/><path transform="translate(24,0)" d="M2 1l1 1M1 4h2v6l1.5-1M5 4h6M9 1v10l-1.5-.5M6.5 6l1 2"/><path transform="translate(36,0)" d="M2 1l1 1M1 4h2v6l1.5-1M8 1L5 5M8 1l3.5 4M6 7v4h5v-1M6 8l4-2"/></g></svg>
<svg class="a" style="left:282px;top:779px" width="36" height="13" viewBox="0 0 36 13"><g stroke="#fff" stroke-width="1" fill="none"><path transform="translate(0,0)" d="M1.5 2h9M6 2v8.5M1 10.5h10"/><path transform="translate(12,0)" d="M1 4h4M3 1v10l-1-.5M1 8l4-2M8 1v1M5.5 3h6v1.5M7 5l-1 2M9 5l2 2M6 8h5M8.5 8v3M5.5 11h6"/><path transform="translate(24,0)" d="M6 1v3L1 11M6 4l5 7"/></g></svg>
<div class="a mono" style="left:317px;top:779px;color:#fff;font-size:11.5px;letter-spacing:-0.9px;line-height:12px">...</div>
<svg class="a" style="left:367px;top:778px" width="17" height="17" viewBox="0 0 17 17"><polygon points="4,1 13,1 16,4 16,13 13,16 4,16 1,13 1,4" fill="#1a0d0d"/><path d="M3 4 L8 3 L8 14 L4 12 Z" fill="#D21A1A"/><path d="M9 6 h5 v4 h-3 v5 h-2 z" fill="#E8E0E0"/></svg>
<div class="a mono" style="left:387px;top:780px;color:#fff;font-size:11.5px;letter-spacing:-0.9px;line-height:12px">MELSOFT series G...</div>
<div class="a" style="left:526px;top:779px;width:16px;height:16px;background:#8A1A30"></div>
<svg class="a" style="left:526px;top:779px" width="16" height="16" viewBox="0 0 16 16"><ellipse cx="8" cy="8" rx="6" ry="3" transform="rotate(-30 8 8)" fill="none" stroke="#fff" stroke-width="1.5"/><ellipse cx="6" cy="9" rx="3" ry="1.5" transform="rotate(-30 6 9)" fill="none" stroke="#fff" stroke-width="1"/></svg>
<div class="a mono" style="left:548px;top:780px;color:#fff;font-size:11.5px;letter-spacing:-0.9px;line-height:12px">Intelligent func...</div>
<svg class="a" style="left:687px;top:777px" width="17" height="19" viewBox="0 0 17 19"><path d="M3 3l3 13h6l3-13z" fill="#E04040"/><path d="M5 4l3 11M9 3l1 12M13 4l-2 11" stroke="#40C040" stroke-width="1.5"/><path d="M4 2l2 2" stroke="#E0C020" stroke-width="2"/></svg>
<div class="a mono" style="left:709px;top:780px;color:#fff;font-size:11.5px;letter-spacing:-0.9px;line-height:12px">AD AND DA 2 -</div>
<svg class="a" style="left:794px;top:779px" width="24" height="13" viewBox="0 0 24 13"><g stroke="#fff" stroke-width="1" fill="none"><path transform="translate(0,0)" d="M1 1.5h10M2.5 4v7h7V4M4.5 5h3v4h-3zM6 5v4M4.5 7h3"/><path transform="translate(12,0)" d="M1 1h10v10H1zM5 2.5L3 5M5 3h3L4 7M5 5l3 2M5 8.5l2 1M4.5 10h3"/></g></svg>
<div class="a" style="left:1112px;top:770px;width:168px;height:30px;background:linear-gradient(#1E9AF5 0,#18A0F8 2px,#0F8FEF 8px,#0E8AEC 22px,#0C74D8 30px);border-left:1px solid #1042AF"></div>
<svg class="a" style="left:1078px;top:780px" width="18" height="13" viewBox="0 0 18 13"><rect x="1" y="2" width="16" height="9" fill="#F4F4F4" stroke="#222"/><path d="M3 5h12M3 7h12M3 9h12" stroke="#444" stroke-dasharray="1 1"/><path d="M6 1h7" stroke="#222"/></svg>
<div class="a" style="left:1104px;top:776px;width:18px;height:18px;border-radius:9px;background:radial-gradient(circle at 40% 35%,#C8E4FF,#4A9AF0 70%);border:1px solid #D8ECFF"></div>
<svg class="a" style="left:1104px;top:776px" width="18" height="18" viewBox="0 0 18 18"><path d="M11 5l-4 4 4 4" stroke="#fff" stroke-width="2.2" fill="none"/></svg>
<svg class="a" style="left:1124px;top:776px" width="18" height="18" viewBox="0 0 18 18"><path d="M3 15L14 4M8 4h6v6" stroke="#0020C0" stroke-width="4" fill="none"/><path d="M3 15L14 4M8 4h6v6" stroke="#fff" stroke-width="1.6" fill="none"/></svg>
<svg class="a" style="left:1142px;top:776px" width="18" height="18" viewBox="0 0 18 18"><circle cx="5" cy="6" r="3" fill="#8AC8F0"/><circle cx="11" cy="5" r="3" fill="#60B040"/><circle cx="7" cy="11" r="3" fill="#C0D0F0"/><circle cx="12" cy="13" r="4" fill="#D03030"/><path d="M10 11l4 4M14 11l-4 4" stroke="#fff"/></svg>
<svg class="a" style="left:1159px;top:776px" width="18" height="18" viewBox="0 0 18 18"><path d="M3 3l10 10M4 5l8 8" stroke="#303030" stroke-width="3"/><path d="M12 12l4 4" stroke="#6080C0" stroke-width="2"/><path d="M3 3l3 1" stroke="#B0B0B0" stroke-width="2"/></svg>
<svg class="a" style="left:1177px;top:776px" width="18" height="19" viewBox="0 0 18 19"><path d="M1 9q8-10 16 0z" fill="#30B040"/><path d="M9 9v8q-1 2-3 0" stroke="#207030" stroke-width="1.5" fill="none"/></svg>
<svg class="a" style="left:1195px;top:776px" width="18" height="18" viewBox="0 0 18 18"><circle cx="9" cy="9" r="7" fill="#3A9AE8" stroke="#C0E0F8" stroke-width="1.5"/><path d="M5 9q4-4 8 0" stroke="#fff" stroke-width="1.5" fill="none"/><rect x="10" y="10" width="7" height="7" fill="#F0A020"/></svg>
<svg class="a" style="left:1213px;top:776px" width="18" height="18" viewBox="0 0 18 18"><path d="M2 2h14v7q0 6-7 8-7-2-7-8z" fill="#2050B0" stroke="#C0D8F8"/><path d="M4 5h10M4 8h10M4 11h9M5 14h7" stroke="#A8D0F8" stroke-width="1.5"/></svg>
<div class="a sans" style="left:1237px;top:778px;color:#fff;font-size:11px;line-height:13px;letter-spacing:0.2px">10:26</div>
<div class="a" style="left:20px;top:121px;width:611px;height:435px;border-radius:7px 7px 0 0;background:#0831D9;overflow:hidden"><div style="position:absolute;left:0;top:0;width:100%;height:29px;background:linear-gradient(#0A3AB8 0,#0A3AB8 1px,#2E86FA 1px,#1A76F4 4px,#0A62EC 7px,#0058E6 11px,#0055E3 18px,#005EEE 22px,#0066F6 26px,#0064F4 27px,#0040C0 28px,#0040C0 30px)"></div></div>
<div class="a" style="left:21px;top:150px;width:609px;height:405px;background:#0A3DD6"></div>
<div class="a" style="left:23px;top:150px;width:605px;height:403px;background:#ECE9D8;border-top:1px solid #F4F6FC"></div>
<div class="a" style="left:20px;top:149px;width:1px;height:407px;background:#0019B8"></div>
<div class="a" style="left:630px;top:149px;width:1px;height:407px;background:#0019B8"></div>
<div class="a" style="left:20px;top:555px;width:611px;height:1px;background:#0019B8"></div>
<div class="a mono" style="left:27px;top:130px;color:#fff;font-size:13.33px;font-weight:bold;line-height:16px;text-shadow:1px 1px 0 #0A1C8A">Auto refresh setting</div>
<div class="a" style="left:559px;top:126px;width:21px;height:21px;border-radius:3px;border:1px solid #FFFFFF;background:linear-gradient(135deg,#6C93F5,#2D63E8 50%,#1F4FD6)"></div>
<div class="a" style="left:565px;top:139px;width:7px;height:3px;background:#FFF"></div>
<div class="a" style="left:582px;top:126px;width:21px;height:21px;border-radius:3px;border:1px solid rgba(255,255,255,0.55);background:linear-gradient(135deg,#6C93F5,#2D63E8 50%,#1F4FD6)"></div>
<div class="a" style="left:587px;top:131px;width:11px;height:10px;border:1px solid #FFF;border-top:3px solid #FFF;opacity:.45"></div>
<div class="a" style="left:605px;top:126px;width:21px;height:21px;border-radius:3px;border:1px solid #FFFFFF;background:linear-gradient(135deg,#E8775A,#D24A22 60%,#C03A18)"></div>
<svg class="a" style="left:605px;top:126px" width="21" height="21"><path d="M6 6 L15 15 M15 6 L6 15" stroke="#fff" stroke-width="2.2"/></svg>
<div class="a" style="left:34px;top:168px;width:580px;height:58px;border:1px solid #D0D0BF;box-shadow:inset 1px 1px 0 #FFF"></div>
<div class="a" style="left:40px;top:163px;width:116px;height:12px;background:#ECE9D8"></div>
<div class="a mono" style="left:42px;top:163px;font-size:11.5px;letter-spacing:-0.9px;line-height:12px">Module information</div>
<div class="a mono" style="left:42px;top:184px;font-size:11.5px;letter-spacing:-0.9px;line-height:12px">Module type: D/A Conversion Module</div>
<div class="a mono" style="left:42px;top:203px;font-size:11.5px;letter-spacing:-0.9px;line-height:12px">Module model name: Q68DAV</div>
<div class="a mono" style="left:338px;top:184px;font-size:11.5px;letter-spacing:-0.9px;line-height:12px">Start I/O No.:</div>
<div class="a mono" style="left:437px;top:184px;font-size:11.5px;letter-spacing:-0.9px;line-height:12px">0240</div>
<div class="a" style="left:34px;top:242px;width:578px;height:249px;background:#000"></div>
<div class="a" style="left:35px;top:243px;width:244px;height:49px;background:#ECE9D8"></div>
<div class="a sans" style="left:35px;top:262px;width:244px;text-align:center;font-size:11.5px;line-height:13px;letter-spacing:-0.25px">Setting item</div>
<div class="a" style="left:280px;top:243px;width:64px;height:49px;background:#ECE9D8"></div>
<div class="a sans" style="left:280px;top:255px;width:64px;text-align:center;font-size:11.5px;line-height:13px;letter-spacing:-0.25px">Module side<br>Buffer size</div>
<div class="a" style="left:345px;top:243px;width:68px;height:49px;background:#ECE9D8"></div>
<div class="a sans" style="left:345px;top:249px;width:68px;text-align:center;font-size:11.5px;line-height:13px;letter-spacing:-0.25px">Module side<br>Transfer<br>word count</div>
<div class="a" style="left:414px;top:243px;width:68px;height:49px;background:#ECE9D8"></div>
<div class="a" style="left:483px;top:243px;width:50px;height:49px;background:#ECE9D8"></div>
<div class="a sans" style="left:483px;top:255px;width:50px;text-align:center;font-size:11.5px;line-height:13px;letter-spacing:-0.25px">Transfer<br>direction</div>
<div class="a" style="left:534px;top:243px;width:61px;height:49px;background:#ECE9D8"></div>
<div class="a sans" style="left:534px;top:255px;width:61px;text-align:center;font-size:11.5px;line-height:13px;letter-spacing:-0.25px">PLC side<br>Device</div>
<div class="a" style="left:34px;top:291px;width:561px;height:2px;background:#000"></div>
<div class="a" style="left:35px;top:293px;width:244px;height:21px;background:#C0C0C0"></div>
<div class="a" style="left:280px;top:293px;width:64px;height:21px;background:#C0C0C0"></div>
<div class="a" style="left:345px;top:293px;width:68px;height:21px;background:#C0C0C0"></div>
<div class="a" style="left:414px;top:293px;width:68px;height:21px;background:#C0C0C0"></div>
<div class="a" style="left:483px;top:293px;width:50px;height:21px;background:#C0C0C0"></div>
<div class="a" style="left:534px;top:293px;width:61px;height:21px;background:#FFFFFF"></div>
<div class="a sans" style="left:37px;top:295px;font-size:11.5px;line-height:13px;letter-spacing:-0.25px">CH1 Digital value</div>
<div class="a sans" style="left:280px;top:295px;width:62px;text-align:right;font-size:11.5px;line-height:13px">1</div>
<div class="a sans" style="left:345px;top:295px;width:66px;text-align:right;font-size:11.5px;line-height:13px">1</div>
<div class="a sans" style="left:483px;top:295px;width:50px;text-align:center;font-size:11.5px;line-height:13px"><-</div>
<div class="a sans" style="left:536px;top:295px;font-size:11.5px;line-height:13px;letter-spacing:-0.25px">D120</div>
<div class="a" style="left:35px;top:315px;width:244px;height:21px;background:#C0C0C0"></div>
<div class="a" style="left:280px;top:315px;width:64px;height:21px;background:#C0C0C0"></div>
<div class="a" style="left:345px;top:315px;width:68px;height:21px;background:#C0C0C0"></div>
<div class="a" style="left:414px;top:315px;width:68px;height:21px;background:#C0C0C0"></div>
<div class="a" style="left:483px;top:315px;width:50px;height:21px;background:#C0C0C0"></div>
<div class="a" style="left:534px;top:315px;width:61px;height:21px;background:#FFFFFF"></div>
<div class="a sans" style="left:37px;top:317px;font-size:11.5px;line-height:13px;letter-spacing:-0.25px">CH2 Digital value</div>
<div class="a sans" style="left:280px;top:317px;width:62px;text-align:right;font-size:11.5px;line-height:13px">1</div>
<div class="a sans" style="left:345px;top:317px;width:66px;text-align:right;font-size:11.5px;line-height:13px">1</div>
<div class="a sans" style="left:483px;top:317px;width:50px;text-align:center;font-size:11.5px;line-height:13px"><-</div>
<div class="a sans" style="left:536px;top:317px;font-size:11.5px;line-height:13px;letter-spacing:-0.25px">D121</div>
<div class="a" style="left:35px;top:337px;width:244px;height:21px;background:#C0C0C0"></div>
<div class="a" style="left:280px;top:337px;width:64px;height:21px;background:#C0C0C0"></div>
<div class="a" style="left:345px;top:337px;width:68px;height:21px;background:#C0C0C0"></div>
<div class="a" style="left:414px;top:337px;width:68px;height:21px;background:#C0C0C0"></div>
<div class="a" style="left:483px;top:337px;width:50px;height:21px;background:#C0C0C0"></div>
<div class="a" style="left:534px;top:337px;width:61px;height:21px;background:#FFFFFF"></div>
<div class="a sans" style="left:37px;top:339px;font-size:11.5px;line-height:13px;letter-spacing:-0.25px">CH3 Digital value</div>
<div class="a sans" style="left:280px;top:339px;width:62px;text-align:right;font-size:11.5px;line-height:13px">1</div>
<div class="a sans" style="left:345px;top:339px;width:66px;text-align:right;font-size:11.5px;line-height:13px">1</div>
<div class="a sans" style="left:483px;top:339px;width:50px;text-align:center;font-size:11.5px;line-height:13px"><-</div>
<div class="a sans" style="left:536px;top:339px;font-size:11.5px;line-height:13px;letter-spacing:-0.25px">D122</div>
<div class="a" style="left:35px;top:359px;width:244px;height:21px;background:#C0C0C0"></div>
<div class="a" style="left:280px;top:359px;width:64px;height:21px;background:#C0C0C0"></div>
<div class="a" style="left:345px;top:359px;width:68px;height:21px;background:#C0C0C0"></div>
<div class="a" style="left:414px;top:359px;width:68px;height:21px;background:#C0C0C0"></div>
<div class="a" style="left:483px;top:359px;width:50px;height:21px;background:#C0C0C0"></div>
<div class="a" style="left:534px;top:359px;width:61px;height:21px;background:#FFFFFF"></div>
<div class="a sans" style="left:37px;top:361px;font-size:11.5px;line-height:13px;letter-spacing:-0.25px">CH4 Digital value</div>
<div class="a sans" style="left:280px;top:361px;width:62px;text-align:right;font-size:11.5px;line-height:13px">1</div>
<div class="a sans" style="left:345px;top:361px;width:66px;text-align:right;font-size:11.5px;line-height:13px">1</div>
<div class="a sans" style="left:483px;top:361px;width:50px;text-align:center;font-size:11.5px;line-height:13px"><-</div>
<div class="a sans" style="left:536px;top:361px;font-size:11.5px;line-height:13px;letter-spacing:-0.25px">D123</div>
<div class="a" style="left:35px;top:381px;width:244px;height:21px;background:#C0C0C0"></div>
<div class="a" style="left:280px;top:381px;width:64px;height:21px;background:#C0C0C0"></div>
<div class="a" style="left:345px;top:381px;width:68px;height:21px;background:#C0C0C0"></div>
<div class="a" style="left:414px;top:381px;width:68px;height:21px;background:#C0C0C0"></div>
<div class="a" style="left:483px;top:381px;width:50px;height:21px;background:#C0C0C0"></div>
<div class="a" style="left:534px;top:381px;width:61px;height:21px;background:#FFFFFF"></div>
<div class="a sans" style="left:37px;top:383px;font-size:11.5px;line-height:13px;letter-spacing:-0.25px">CH5 Digital value</div>
<div class="a sans" style="left:280px;top:383px;width:62px;text-align:right;font-size:11.5px;line-height:13px">1</div>
<div class="a sans" style="left:345px;top:383px;width:66px;text-align:right;font-size:11.5px;line-height:13px">1</div>
<div class="a sans" style="left:483px;top:383px;width:50px;text-align:center;font-size:11.5px;line-height:13px"><-</div>
<div class="a sans" style="left:536px;top:383px;font-size:11.5px;line-height:13px;letter-spacing:-0.25px">D124</div>
<div class="a" style="left:35px;top:403px;width:244px;height:21px;background:#C0C0C0"></div>
<div class="a" style="left:280px;top:403px;width:64px;height:21px;background:#C0C0C0"></div>
<div class="a" style="left:345px;top:403px;width:68px;height:21px;background:#C0C0C0"></div>
<div class="a" style="left:414px;top:403px;width:68px;height:21px;background:#C0C0C0"></div>
<div class="a" style="left:483px;top:403px;width:50px;height:21px;background:#C0C0C0"></div>
<div class="a" style="left:534px;top:403px;width:61px;height:21px;background:#FFFFFF"></div>
<div class="a sans" style="left:37px;top:405px;font-size:11.5px;line-height:13px;letter-spacing:-0.25px">CH6 Digital value</div>
<div class="a sans" style="left:280px;top:405px;width:62px;text-align:right;font-size:11.5px;line-height:13px">1</div>
<div class="a sans" style="left:345px;top:405px;width:66px;text-align:right;font-size:11.5px;line-height:13px">1</div>
<div class="a sans" style="left:483px;top:405px;width:50px;text-align:center;font-size:11.5px;line-height:13px"><-</div>
<div class="a sans" style="left:536px;top:405px;font-size:11.5px;line-height:13px;letter-spacing:-0.25px">D125</div>
<div class="a" style="left:35px;top:425px;width:244px;height:21px;background:#C0C0C0"></div>
<div class="a" style="left:280px;top:425px;width:64px;height:21px;background:#C0C0C0"></div>
<div class="a" style="left:345px;top:425px;width:68px;height:21px;background:#C0C0C0"></div>
<div class="a" style="left:414px;top:425px;width:68px;height:21px;background:#C0C0C0"></div>
<div class="a" style="left:483px;top:425px;width:50px;height:21px;background:#C0C0C0"></div>
<div class="a" style="left:534px;top:425px;width:61px;height:21px;background:#FFFFFF"></div>
<div class="a sans" style="left:37px;top:427px;font-size:11.5px;line-height:13px;letter-spacing:-0.25px">CH7 Digital value</div>
<div class="a sans" style="left:280px;top:427px;width:62px;text-align:right;font-size:11.5px;line-height:13px">1</div>
<div class="a sans" style="left:345px;top:427px;width:66px;text-align:right;font-size:11.5px;line-height:13px">1</div>
<div class="a sans" style="left:483px;top:427px;width:50px;text-align:center;font-size:11.5px;line-height:13px"><-</div>
<div class="a sans" style="left:536px;top:427px;font-size:11.5px;line-height:13px;letter-spacing:-0.25px">D126</div>
<div class="a" style="left:35px;top:447px;width:244px;height:21px;background:#C0C0C0"></div>
<div class="a" style="left:280px;top:447px;width:64px;height:21px;background:#C0C0C0"></div>
<div class="a" style="left:345px;top:447px;width:68px;height:21px;background:#C0C0C0"></div>
<div class="a" style="left:414px;top:447px;width:68px;height:21px;background:#C0C0C0"></div>
<div class="a" style="left:483px;top:447px;width:50px;height:21px;background:#C0C0C0"></div>
<div class="a" style="left:534px;top:447px;width:61px;height:21px;background:#FFFFFF"></div>
<div class="a sans" style="left:37px;top:449px;font-size:11.5px;line-height:13px;letter-spacing:-0.25px">CH8 Digital value</div>
<div class="a sans" style="left:280px;top:449px;width:62px;text-align:right;font-size:11.5px;line-height:13px">1</div>
<div class="a sans" style="left:345px;top:449px;width:66px;text-align:right;font-size:11.5px;line-height:13px">1</div>
<div class="a sans" style="left:483px;top:449px;width:50px;text-align:center;font-size:11.5px;line-height:13px"><-</div>
<div class="a sans" style="left:536px;top:449px;font-size:11.5px;line-height:13px;letter-spacing:-0.25px">D127</div>
<div class="a" style="left:35px;top:469px;width:244px;height:21px;background:#C0C0C0"></div>
<div class="a" style="left:280px;top:469px;width:64px;height:21px;background:#C0C0C0"></div>
<div class="a" style="left:345px;top:469px;width:68px;height:21px;background:#C0C0C0"></div>
<div class="a" style="left:414px;top:469px;width:68px;height:21px;background:#C0C0C0"></div>
<div class="a" style="left:483px;top:469px;width:50px;height:21px;background:#C0C0C0"></div>
<div class="a" style="left:534px;top:469px;width:61px;height:21px;background:#FFFFFF"></div>
<div class="a sans" style="left:37px;top:471px;font-size:11.5px;line-height:13px;letter-spacing:-0.25px">CH1 Set value check code</div>
<div class="a sans" style="left:280px;top:471px;width:62px;text-align:right;font-size:11.5px;line-height:13px">1</div>
<div class="a sans" style="left:345px;top:471px;width:66px;text-align:right;font-size:11.5px;line-height:13px">1</div>
<div class="a sans" style="left:483px;top:471px;width:50px;text-align:center;font-size:11.5px;line-height:13px">-></div>
<div class="a sans" style="left:536px;top:471px;font-size:11.5px;line-height:13px;letter-spacing:-0.25px">D128</div>
<div class="a" style="left:534px;top:293px;width:61px;height:21px;border:2px solid #000;border-left-width:1px;border-top-width:1px"></div>
<div class="a" style="left:34px;top:489px;width:578px;height:2px;background:#000"></div>
<div class="a" style="left:595px;top:243px;width:16px;height:246px;background-color:#F4F3EE;background-image:repeating-conic-gradient(#ECE9D8 0 25%,#FFFFFF 0 50%);background-size:2px 2px"></div>
<div class="a" style="left:595px;top:243px;width:16px;height:16px;background:#ECE9D8;border:1px solid;border-color:#ECE9D8 #716F64 #716F64 #ECE9D8;box-shadow:inset 1px 1px 0 #FFF,inset -1px -1px 0 #ACA899"></div>
<svg class="a" style="left:595px;top:243px" width="16" height="16" viewBox="0 0 16 16"><path d="M4 10h8l-4-4z" fill="#000"/></svg>
<div class="a" style="left:595px;top:259px;width:16px;height:114px;background:#ECE9D8;border:1px solid;border-color:#ECE9D8 #716F64 #716F64 #ECE9D8;box-shadow:inset 1px 1px 0 #FFF,inset -1px -1px 0 #ACA899"></div>
<div class="a" style="left:595px;top:474px;width:16px;height:16px;background:#ECE9D8;border:1px solid;border-color:#ECE9D8 #716F64 #716F64 #ECE9D8;box-shadow:inset 1px 1px 0 #FFF,inset -1px -1px 0 #ACA899"></div>
<svg class="a" style="left:595px;top:474px" width="16" height="16" viewBox="0 0 16 16"><path d="M4 6h8l-4 4z" fill="#000"/></svg>
<div class="a" style="left:33px;top:516px;width:95px;height:21px;background:#ECE9D8;border:1px solid;border-color:#FFF #716F64 #716F64 #FFF;box-shadow:inset -1px -1px 0 #ACA899"></div>
<div class="a mono" style="left:33px;top:521px;width:95px;text-align:center;font-size:11.5px;letter-spacing:-0.9px;line-height:12px">Make text file</div>
<div class="a" style="left:277px;top:516px;width:95px;height:21px;background:#ECE9D8;border:1px solid;border-color:#FFF #716F64 #716F64 #FFF;box-shadow:inset -1px -1px 0 #ACA899"></div>
<div class="a mono" style="left:277px;top:521px;width:95px;text-align:center;font-size:11.5px;letter-spacing:-0.9px;line-height:12px">End setup</div>
<div class="a" style="left:520px;top:516px;width:95px;height:21px;background:#ECE9D8;border:1px solid;border-color:#FFF #716F64 #716F64 #FFF;box-shadow:inset -1px -1px 0 #ACA899"></div>
<div class="a mono" style="left:520px;top:521px;width:95px;text-align:center;font-size:11.5px;letter-spacing:-0.9px;line-height:12px">Cancel</div>
<div class="a" style="left:798px;top:48px;width:458px;height:452px;border-radius:7px 7px 0 0;background:#7385E0;overflow:hidden"><div style="position:absolute;left:0;top:0;width:100%;height:29px;background:linear-gradient(#8FA6EA 0,#9DB5EE 1px,#93ADEC 3px,#7D99E3 4px,#7794E0 9px,#7895E0 15px,#7BA0E6 21px,#7BA5E9 25px,#6F86D8 27px,#6C80D4 29px)"></div></div>
<div class="a" style="left:802px;top:77px;width:450px;height:419px;background:#ECE9D8"></div>
<div class="a" style="left:804px;top:58px;width:16px;height:15px;background:#8A1028"></div>
<svg class="a" style="left:804px;top:58px" width="16" height="15" viewBox="0 0 16 15"><ellipse cx="9" cy="7" rx="6" ry="3" transform="rotate(-30 9 7)" fill="none" stroke="#fff" stroke-width="1.5"/><ellipse cx="6" cy="9" rx="3" ry="1.5" transform="rotate(-30 6 9)" fill="none" stroke="#fff" stroke-width="1"/><circle cx="12" cy="12" r="1" fill="#E080E0"/></svg>
<div class="a mono" style="left:824px;top:58px;color:#EEF2FC;font-size:13.33px;font-weight:bold;line-height:16px">Intelligent function module utility F:\SS...</div>
<div class="a" style="left:1184px;top:54px;width:21px;height:21px;border-radius:3px;border:1px solid #B8CAF4;background:linear-gradient(135deg,#7F9DEA,#5E7FE0 60%,#4B6BD8)"></div>
<div class="a" style="left:1190px;top:67px;width:7px;height:3px;background:#FFF"></div>
<div class="a" style="left:1207px;top:54px;width:21px;height:21px;border-radius:3px;border:1px solid #B8CAF4;background:linear-gradient(135deg,#7F9DEA,#5E7FE0 60%,#4B6BD8)"></div>
<div class="a" style="left:1212px;top:59px;width:11px;height:10px;border:1px solid #FFF;border-top:3px solid #FFF"></div>
<div class="a" style="left:1230px;top:54px;width:21px;height:21px;border-radius:3px;border:1px solid #E2C2D0;background:linear-gradient(135deg,#C97B7B,#B66A7A)"></div>
<svg class="a" style="left:1230px;top:54px" width="21" height="21"><path d="M6 6 L15 15 M15 6 L6 15" stroke="#fff" stroke-width="2.2"/></svg>
<div class="a menu" style="left:808px;top:82px;line-height:12px;font-size:11.5px;letter-spacing:-0.9px">Intelligent function module parameter</div>
<div class="a menu" style="left:1041px;top:82px;line-height:12px;font-size:11.5px;letter-spacing:-0.9px">Online</div>
<div class="a menu" style="left:1090px;top:82px;line-height:12px;font-size:11.5px;letter-spacing:-0.9px">Tools</div>
<div class="a menu" style="left:1132px;top:82px;line-height:12px;font-size:11.5px;letter-spacing:-0.9px">Help</div>
<div class="a" style="left:802px;top:98px;width:450px;height:1px;background:#A3A08F"></div>
<div class="a" style="left:802px;top:99px;width:450px;height:1px;background:#FFF"></div>
<div class="a" style="left:816px;top:118px;width:423px;height:110px;border:1px solid #D0D0BF;box-shadow:inset 1px 1px 0 #FFF"></div>
<div class="a" style="left:822px;top:112px;width:262px;height:12px;background:#ECE9D8"></div>
<div class="a mono" style="left:823px;top:112px;font-size:11.5px;letter-spacing:-0.9px;line-height:12px">Select a target intelligent function module.</div>
<div class="a mono" style="left:845px;top:133px;font-size:11.5px;letter-spacing:-0.9px;line-height:12px">Start I/O No.</div>
<div class="combo" style="left:849px;top:146px;width:78px;height:18px"></div>
<div class="a sans" style="left:850px;top:149px;width:73px;text-align:right;font-size:11.5px;line-height:13px;letter-spacing:-0.3px">0240</div>
<div class="a mono" style="left:971px;top:133px;font-size:11.5px;letter-spacing:-0.9px;line-height:12px">Module type</div>
<div class="combo" style="left:979px;top:149px;width:240px;height:18px"></div>
<div class="a mono" style="left:982px;top:153px;font-size:11.5px;letter-spacing:-0.9px;line-height:12px">D/A Conversion Module</div>
<div class="cbb" style="left:1201px;top:150px;width:17px;height:16px"></div>
<div class="tri" style="left:1205px;top:156px"></div>
<div class="a mono" style="left:971px;top:178px;font-size:11.5px;letter-spacing:-0.9px;line-height:12px">Module model name</div>
<div class="combo" style="left:979px;top:196px;width:240px;height:18px"></div>
<div class="a mono" style="left:982px;top:200px;font-size:11.5px;letter-spacing:-0.9px;line-height:12px">Q68DAV</div>
<div class="cbb" style="left:1201px;top:197px;width:17px;height:16px"></div>
<div class="tri" style="left:1205px;top:203px"></div>
<div class="a mono" style="left:821px;top:242px;font-size:11.5px;letter-spacing:-0.9px;line-height:12px">Parameter setting module</div>
<div class="a" style="left:815px;top:276px;width:425px;height:180px;border:1px solid;border-color:#FFF #716F64 #716F64 #FFF;box-shadow:inset -1px -1px 0 #ACA899"></div>
<div class="a" style="left:817px;top:258px;width:236px;height:19px;background:#316AC5;border-top:1px solid #fff"></div>
<div class="a mono" style="left:823px;top:261px;color:#fff;font-size:11.5px;letter-spacing:-0.9px;line-height:12px">Intelligent function module parameter</div>
<div class="a" style="left:824px;top:285px;width:406px;height:136px;background:#000"></div>
<div class="a" style="left:825px;top:286px;width:82px;height:18px;background:#ECE9D8"></div>
<div class="a sans" style="left:825px;top:289px;width:82px;text-align:center;font-size:11.5px;line-height:13px;letter-spacing:-0.35px">Start I/O No.</div>
<div class="a" style="left:908px;top:286px;width:160px;height:18px;background:#ECE9D8"></div>
<div class="a sans" style="left:908px;top:289px;width:160px;text-align:center;font-size:11.5px;line-height:13px;letter-spacing:-0.35px">Module model name</div>
<div class="a" style="left:1069px;top:286px;width:72px;height:18px;background:#ECE9D8"></div>
<div class="a sans" style="left:1069px;top:289px;width:72px;text-align:center;font-size:11.5px;line-height:13px;letter-spacing:-0.35px">Initial setting</div>
<div class="a" style="left:1142px;top:286px;width:72px;height:18px;background:#ECE9D8"></div>
<div class="a sans" style="left:1142px;top:289px;width:72px;text-align:center;font-size:11.5px;line-height:13px;letter-spacing:-0.35px">Auto refresh</div>
<div class="a" style="left:825px;top:305px;width:82px;height:14px;background:#FFFFFF"></div>
<div class="a" style="left:908px;top:305px;width:160px;height:14px;background:#C0C0C0"></div>
<div class="a" style="left:1069px;top:305px;width:72px;height:14px;background:#C0C0C0"></div>
<div class="a" style="left:1142px;top:305px;width:72px;height:14px;background:#316AC5"></div>
<div class="a sans" style="left:908px;top:306px;width:-1px;font-size:11.5px;line-height:13px;letter-spacing:-0.35px"></div>
<div class="a sans" style="left:825px;top:307px;width:81px;text-align:right;font-size:11.5px;line-height:13px;letter-spacing:-0.35px">0220</div>
<div class="a sans" style="left:909px;top:307px;font-size:11.5px;line-height:13px;letter-spacing:-0.35px">QD75D2</div>
<div class="a sans" style="left:1069px;top:307px;width:72px;text-align:center;color:#000;font-size:11.5px;line-height:13px;letter-spacing:-0.35px">Unavailable</div>
<div class="a sans" style="left:1142px;top:307px;width:72px;text-align:center;color:#fff;font-size:11.5px;line-height:13px;letter-spacing:-0.35px">Available</div>
<div class="a" style="left:825px;top:320px;width:82px;height:14px;background:#FFFFFF"></div>
<div class="a" style="left:908px;top:320px;width:160px;height:14px;background:#C0C0C0"></div>
<div class="a" style="left:1069px;top:320px;width:72px;height:14px;background:#316AC5"></div>
<div class="a" style="left:1142px;top:320px;width:72px;height:14px;background:#316AC5"></div>
<div class="a sans" style="left:908px;top:321px;width:-1px;font-size:11.5px;line-height:13px;letter-spacing:-0.35px"></div>
<div class="a sans" style="left:825px;top:322px;width:81px;text-align:right;font-size:11.5px;line-height:13px;letter-spacing:-0.35px">0240</div>
<div class="a sans" style="left:909px;top:322px;font-size:11.5px;line-height:13px;letter-spacing:-0.35px">Q68DAV</div>
<div class="a sans" style="left:1069px;top:322px;width:72px;text-align:center;color:#fff;font-size:11.5px;line-height:13px;letter-spacing:-0.35px">Available</div>
<div class="a sans" style="left:1142px;top:322px;width:72px;text-align:center;color:#fff;font-size:11.5px;line-height:13px;letter-spacing:-0.35px">Available</div>
<div class="a" style="left:825px;top:335px;width:82px;height:14px;background:#FFFFFF"></div>
<div class="a" style="left:908px;top:335px;width:160px;height:14px;background:#C0C0C0"></div>
<div class="a" style="left:1069px;top:335px;width:72px;height:14px;background:#C0C0C0"></div>
<div class="a" style="left:1142px;top:335px;width:72px;height:14px;background:#C0C0C0"></div>
<div class="a sans" style="left:908px;top:336px;width:-1px;font-size:11.5px;line-height:13px;letter-spacing:-0.35px"></div>
<div class="a sans" style="left:825px;top:337px;width:81px;text-align:right;font-size:11.5px;line-height:13px;letter-spacing:-0.35px">0250</div>
<div class="a sans" style="left:909px;top:335px;font-size:11.5px;line-height:13px;letter-spacing:-0.35px">*</div>
<div class="a sans" style="left:1069px;top:337px;width:72px;text-align:center;color:#000;font-size:11.5px;line-height:13px;letter-spacing:-0.35px">Unavailable</div>
<div class="a sans" style="left:1142px;top:337px;width:72px;text-align:center;color:#000;font-size:11.5px;line-height:13px;letter-spacing:-0.35px">Available</div>
<div class="a" style="left:825px;top:350px;width:82px;height:14px;background:#C0C0C0"></div>
<div class="a" style="left:908px;top:350px;width:160px;height:14px;background:#C0C0C0"></div>
<div class="a" style="left:1069px;top:350px;width:72px;height:14px;background:#C0C0C0"></div>
<div class="a" style="left:1142px;top:350px;width:72px;height:14px;background:#C0C0C0"></div>
<div class="a" style="left:825px;top:365px;width:82px;height:14px;background:#C0C0C0"></div>
<div class="a" style="left:908px;top:365px;width:160px;height:14px;background:#C0C0C0"></div>
<div class="a" style="left:1069px;top:365px;width:72px;height:14px;background:#C0C0C0"></div>
<div class="a" style="left:1142px;top:365px;width:72px;height:14px;background:#C0C0C0"></div>
<div class="a" style="left:825px;top:380px;width:82px;height:14px;background:#C0C0C0"></div>
<div class="a" style="left:908px;top:380px;width:160px;height:14px;background:#C0C0C0"></div>
<div class="a" style="left:1069px;top:380px;width:72px;height:14px;background:#C0C0C0"></div>
<div class="a" style="left:1142px;top:380px;width:72px;height:14px;background:#C0C0C0"></div>
<div class="a" style="left:825px;top:395px;width:82px;height:14px;background:#C0C0C0"></div>
<div class="a" style="left:908px;top:395px;width:160px;height:14px;background:#C0C0C0"></div>
<div class="a" style="left:1069px;top:395px;width:72px;height:14px;background:#C0C0C0"></div>
<div class="a" style="left:1142px;top:395px;width:72px;height:14px;background:#C0C0C0"></div>
<div class="a" style="left:825px;top:410px;width:82px;height:11px;background:#C0C0C0"></div>
<div class="a" style="left:908px;top:410px;width:160px;height:11px;background:#C0C0C0"></div>
<div class="a" style="left:1069px;top:410px;width:72px;height:11px;background:#C0C0C0"></div>
<div class="a" style="left:1142px;top:410px;width:72px;height:11px;background:#C0C0C0"></div>
<div class="a" style="left:908px;top:320px;width:160px;height:15px;border:1px solid #6F6F6F;box-shadow:inset 1px 1px 0 #E8E8E0"></div>
<div class="a" style="left:1214px;top:286px;width:15px;height:134px;background-color:#F4F3EE;background-image:repeating-conic-gradient(#ECE9D8 0 25%,#FFFFFF 0 50%);background-size:2px 2px"></div>
<div class="a" style="left:1214px;top:286px;width:15px;height:16px;background:#ECE9D8;border:1px solid;border-color:#ECE9D8 #716F64 #716F64 #ECE9D8;box-shadow:inset 1px 1px 0 #FFF,inset -1px -1px 0 #ACA899"></div>
<svg class="a" style="left:1214px;top:286px" width="15" height="16" viewBox="0 0 15 16"><path d="M4 10h7l-3.5-4z" fill="#000"/></svg>
<div class="a" style="left:1214px;top:302px;width:15px;height:11px;background:#ECE9D8;border:1px solid;border-color:#ECE9D8 #716F64 #716F64 #ECE9D8;box-shadow:inset 1px 1px 0 #FFF,inset -1px -1px 0 #ACA899"></div>
<div class="a" style="left:1214px;top:406px;width:15px;height:15px;background:#ECE9D8;border:1px solid;border-color:#ECE9D8 #716F64 #716F64 #ECE9D8;box-shadow:inset 1px 1px 0 #FFF,inset -1px -1px 0 #ACA899"></div>
<svg class="a" style="left:1214px;top:406px" width="15" height="15" viewBox="0 0 15 15"><path d="M4 6h7l-3.5 4z" fill="#000"/></svg>
<div class="a" style="left:815px;top:469px;width:99px;height:21px;background:#ECE9D8;border:1px solid;border-color:#FFF #716F64 #716F64 #FFF;box-shadow:inset -1px -1px 0 #ACA899"></div>
<div class="a mono" style="left:815px;top:474px;width:99px;text-align:center;font-size:11.5px;letter-spacing:-0.9px;line-height:12px">Initial setting</div>
<div class="a" style="left:923px;top:469px;width:99px;height:21px;background:#ECE9D8;border:1px solid #000;box-shadow:inset 1px 1px 0 #FFF,inset -1px -1px 0 #716F64,inset -2px -2px 0 #ACA899"></div>
<div class="a mono" style="left:923px;top:474px;width:99px;text-align:center;font-size:11.5px;letter-spacing:-0.9px;line-height:12px">Auto refresh</div>
<div class="a" style="left:1031px;top:469px;width:99px;height:21px;background:#ECE9D8;border:1px solid;border-color:#FFF #716F64 #716F64 #FFF;box-shadow:inset -1px -1px 0 #ACA899"></div>
<div class="a mono" style="left:1031px;top:474px;width:99px;text-align:center;font-size:11.5px;letter-spacing:-0.9px;line-height:12px">Delete</div>
<div class="a" style="left:1139px;top:469px;width:99px;height:21px;background:#ECE9D8;border:1px solid;border-color:#FFF #716F64 #716F64 #FFF;box-shadow:inset -1px -1px 0 #ACA899"></div>
<div class="a mono" style="left:1139px;top:474px;width:99px;text-align:center;font-size:11.5px;letter-spacing:-0.9px;line-height:12px">Exit</div>
</body></html>
